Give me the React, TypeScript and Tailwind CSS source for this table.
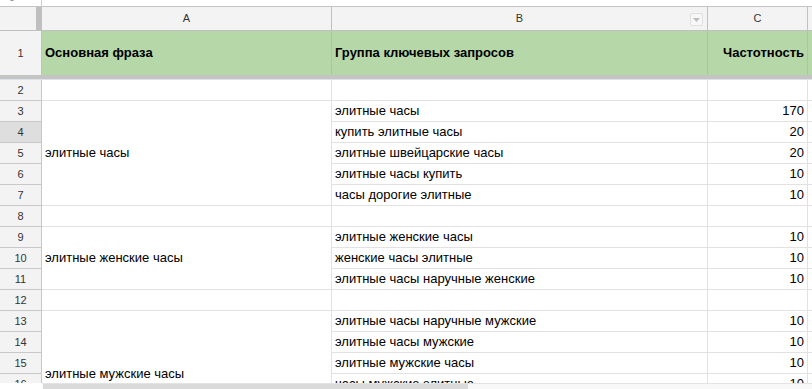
import React from "react";

type Row = { n: number; a?: string; span?: number; b?: string; c?: string; covered?: boolean };

const spanClass: Record<number, string> = {
  1: "",
  3: "row-span-3",
  5: "row-span-5",
  6: "row-span-6",
};

const rows: Row[] = [
  { n: 2 },
  { n: 3, a: "элитные часы", span: 5, b: "элитные часы", c: "170" },
  { n: 4, covered: true, b: "купить элитные часы", c: "20" },
  { n: 5, covered: true, b: "элитные швейцарские часы", c: "20" },
  { n: 6, covered: true, b: "элитные часы купить", c: "10" },
  { n: 7, covered: true, b: "часы дорогие элитные", c: "10" },
  { n: 8 },
  { n: 9, a: "элитные женские часы", span: 3, b: "элитные женские часы", c: "10" },
  { n: 10, covered: true, b: "женские часы элитные", c: "10" },
  { n: 11, covered: true, b: "элитные часы наручные женские", c: "10" },
  { n: 12 },
  { n: 13, a: "элитные мужские часы", span: 6, b: "элитные часы наручные мужские", c: "10" },
  { n: 14, covered: true, b: "элитные часы мужские", c: "10" },
  { n: 15, covered: true, b: "элитные мужские часы", c: "10" },
  { n: 16, covered: true, b: "часы мужские элитные", c: "10" },
  { n: 17, covered: true, b: "мужские элитные часы", c: "10" },
  { n: 18, covered: true, b: "элитные часы для мужчин", c: "10" },
];

export default function App() {
  return (
    <div
      className="relative h-[389px] w-[812px] overflow-hidden bg-white text-black"
      style={{ fontFamily: '"Liberation Sans", Arial, sans-serif' }}
    >
      {/* top strip */}
      <div className="flex h-[7px] border-b border-[#c4c4c4]">
        <div className="h-[6px] w-[42px] overflow-hidden border-r border-[#d0d0d0]">
          <div className="-mt-[9px] pl-[9px] text-[11px] leading-[12px] text-[#888]">9</div>
        </div>
        <div className="flex-1" />
      </div>

      <div className="grid grid-cols-[42px_290px_376px_100px_1fr]">
        {/* column header row */}
        <div className="col-start-1 flex h-[24px] border-b border-[#c0c0c0] bg-[#f3f3f3]">
          <div className="w-[36px]" />
          <div className="w-[6px] bg-[#bfbfbf]" />
        </div>
        <div className="col-start-2 flex h-[24px] items-center justify-center border-b border-r border-[#c0c0c0] bg-[#f3f3f3] text-[11px] text-[#333]">
          A
        </div>
        <div className="relative col-start-3 flex h-[24px] items-center justify-center border-b border-r border-[#c0c0c0] bg-[#f3f3f3] text-[11px] text-[#333]">
          B
          <div className="absolute right-[4px] top-[6px] flex h-[13px] w-[13px] items-center justify-center rounded-[2px] border border-[#e0e0e0] bg-[#f7f7f7]">
            <svg width="7" height="4" viewBox="0 0 7 4">
              <path d="M0 0 L7 0 L3.5 4 Z" fill="#bdbdbd" />
            </svg>
          </div>
        </div>
        <div className="col-start-4 flex h-[24px] items-center justify-center border-b border-r border-[#c0c0c0] bg-[#f3f3f3] text-[11px] text-[#333]">
          C
        </div>
        <div className="col-start-5 h-[24px] border-b border-[#c0c0c0] bg-[#f3f3f3]" />

        {/* row 1 */}
        <div className="col-start-1 flex h-[44px] items-center justify-center border-r border-[#c0c0c0] bg-[#f3f3f3] text-[11px] text-[#333]">
          1
        </div>
        <div className="col-start-2 flex h-[44px] items-center border-r border-[#a9c99b] bg-[#b6d7a8] pl-[3px] text-[13px] font-bold">
          Основная фраза
        </div>
        <div className="col-start-3 flex h-[44px] items-center border-r border-[#a9c99b] bg-[#b6d7a8] pl-[3px] text-[13px] font-bold">
          Группа ключевых запросов
        </div>
        <div className="col-start-4 flex h-[44px] items-center justify-end border-r border-[#a9c99b] bg-[#b6d7a8] pr-[3px] text-[13px] font-bold">
          Частотность
        </div>
        <div className="col-start-5 h-[44px] bg-[#b6d7a8]" />

        {/* freeze bar */}
        <div className="col-span-5 col-start-1 h-[5px] border-b border-[#dde1e8] bg-[#c4c4c4]" />

        {/* body */}
        {rows.map((r) => (
          <React.Fragment key={r.n}>
            <div
              className={`col-start-1 flex h-[21px] items-center justify-center border-b border-r border-[#c8c8c8] text-[11px] text-[#333] ${
                r.n === 4 ? "bg-[#dedede]" : "bg-[#f3f3f3]"
              }`}
            >
              {r.n}
            </div>
            {!r.covered && (
              <div
                className={`col-start-2 flex items-center border-b border-r border-[#e2e2e2] pl-[3px] text-[13px] ${
                  r.span ? spanClass[r.span] : "h-[21px]"
                }`}
              >
                {r.a}
              </div>
            )}
            <div className="col-start-3 flex h-[21px] items-center border-b border-r border-[#e2e2e2] pl-[3px] text-[13px]">
              {r.b}
            </div>
            <div className="col-start-4 flex h-[21px] items-center justify-end border-b border-r border-[#e2e2e2] pr-[3px] text-[13px]">
              {r.c}
            </div>
            <div className="col-start-5 h-[21px] border-b border-[#e2e2e2]" />
          </React.Fragment>
        ))}
      </div>

      {/* horizontal scrollbar overlay */}
      <div className="absolute bottom-0 left-0 right-0 flex h-[6px]">
        <div className="w-[42px] bg-white" />
        <div className="flex-1 border-t border-[#e3e3e3] bg-[#f8f8f8] pl-[1px]">
          <div className="h-full w-[425px] bg-[#dadada]" />
        </div>
      </div>
    </div>
  );
}
